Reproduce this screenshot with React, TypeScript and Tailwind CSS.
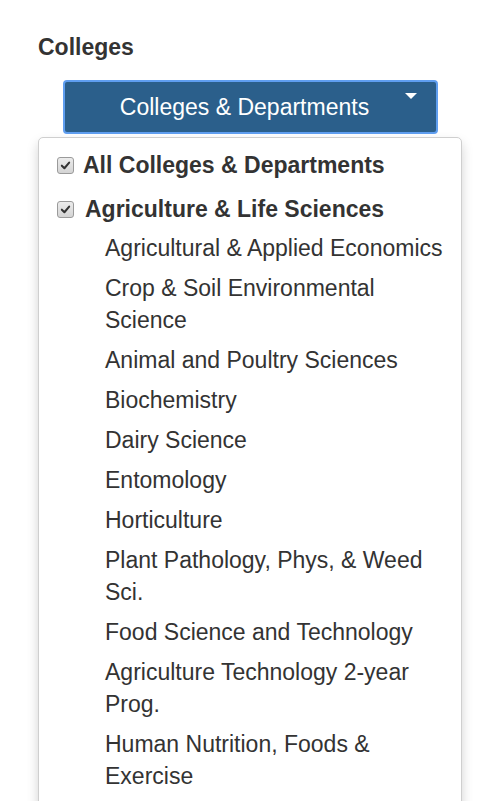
import React from "react";

const departments = [
  "Agricultural & Applied Economics",
  "Crop & Soil Environmental Science",
  "Animal and Poultry Sciences",
  "Biochemistry",
  "Dairy Science",
  "Entomology",
  "Horticulture",
  "Plant Pathology, Phys, & Weed Sci.",
  "Food Science and Technology",
  "Agriculture Technology 2-year Prog.",
  "Human Nutrition, Foods & Exercise",
];

function CheckMark() {
  return (
    <span className="inline-flex w-[17px] h-[17px] shrink-0 items-center justify-center rounded-[3px] border border-[#9a9a9a] bg-gradient-to-b from-[#ececec] to-[#d4d4d4]">
      <svg viewBox="0 0 12 12" className="w-[11px] h-[11px]">
        <path d="M2 6.2 L4.8 9 L10 2.8" fill="none" stroke="#333" strokeWidth="2.2" strokeLinecap="round" strokeLinejoin="round" />
      </svg>
    </span>
  );
}

export default function App() {
  return (
    <div className="min-h-[801px] bg-white text-[#333] font-['Liberation_Sans',Arial,sans-serif] pt-[34px] pl-[38px] pr-[21px] overflow-hidden">
      <h3 className="text-[23px] font-bold leading-[26px]">Colleges</h3>

      <div className="pl-[25px] pr-[24px] mt-[20px]">
        <button className="relative w-full h-[54px] pr-[12px] rounded-[4px] border-2 border-[#5f9ef0] bg-[#2b5f8b] text-white text-[23px] leading-none">
          Colleges &amp; Departments
          <span className="absolute right-[19px] top-[11px] w-0 h-0 border-l-[6px] border-r-[6px] border-t-[6px] border-l-transparent border-r-transparent border-t-white" />
        </button>
      </div>

      <div className="mt-[3px] h-[700px] rounded-[5px] border border-[#cfcfcf] bg-white shadow-[0_6px_12px_rgba(0,0,0,0.175)] pt-[14px] pl-[18px] pr-[14px]">
        <label className="flex items-center gap-[9px] h-[26px]">
          <CheckMark />
          <span className="text-[23px] font-bold leading-[26px]">All Colleges &amp; Departments</span>
        </label>
        <label className="flex items-center gap-[11px] h-[26px] mt-[18px]">
          <CheckMark />
          <span className="text-[23px] font-bold leading-[26px]">Agriculture &amp; Life Sciences</span>
        </label>
        <ul className="mt-[10px] pl-[48px] flex flex-col gap-[8px]">
          {departments.map((d) => (
            <li key={d} className="text-[23px] leading-[32px]">
              {d}
            </li>
          ))}
        </ul>
      </div>
    </div>
  );
}
